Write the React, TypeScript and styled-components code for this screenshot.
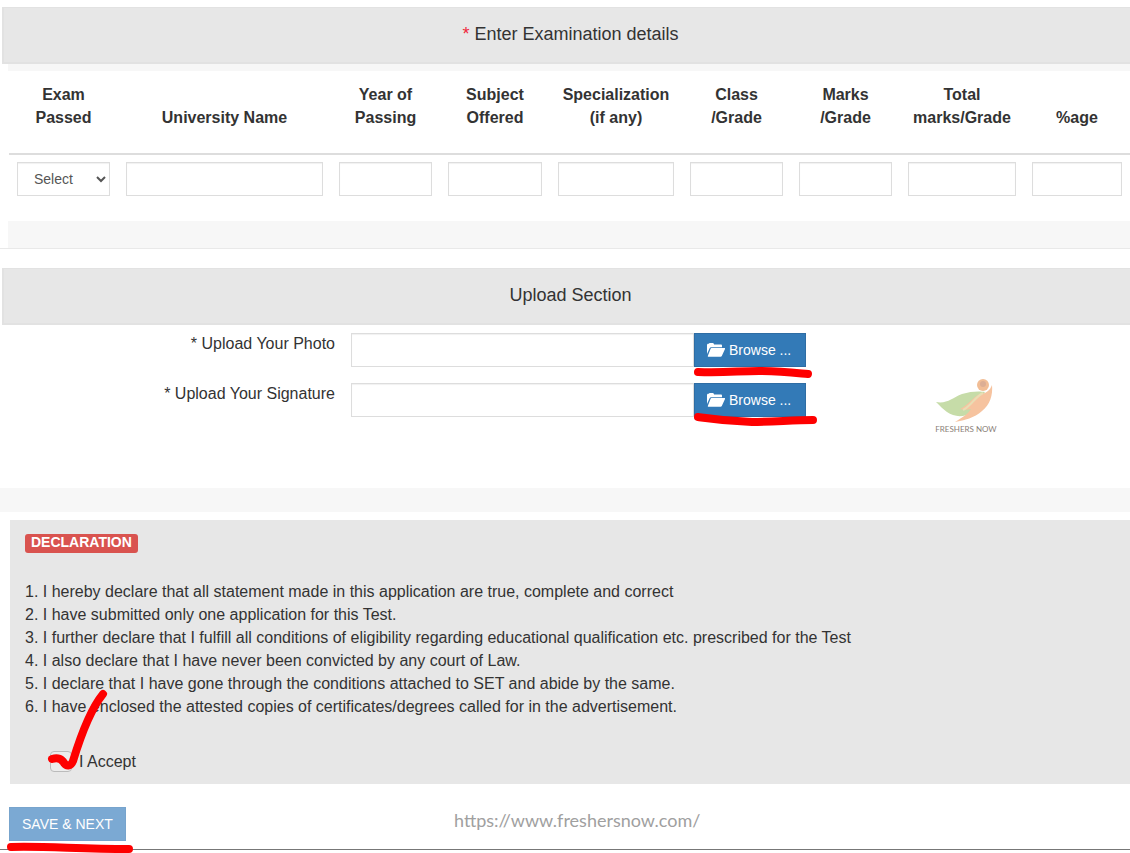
import React from "react";
import styled, { createGlobalStyle } from "styled-components";

const GlobalStyle = createGlobalStyle`
  *, *::before, *::after { box-sizing: border-box; }
  body {
    margin: 0;
    background: #fff;
    color: #333;
    font-family: "Liberation Sans", Arial, sans-serif;
    font-size: 16px;
    line-height: 23px;
  }
`;

const Page = styled.main`
  min-height: 100vh;
  padding: 7px 0 3px;
`;

const Heading = styled.h2`
  margin: 0 0 0 2px;
  padding: 15px 0 17px 7px;
  border: 1px solid #e2e2e2;
  border-width: 1px 0 2px 2px;
  background: #e7e7e7;
  font-size: 18px;
  font-weight: 400;
  line-height: 22px;
  text-align: center;
`;

const Required = styled.span`
  color: #f0283c;
`;

const ExamSection = styled.section`
  margin-bottom: 19px;
  border-bottom: 1px solid #e9e9e9;
`;

const ExamPanel = styled.div`
  margin-left: 8px;
  padding: 7px 0 27px;
  background: #f7f7f7;
`;

const TableWrap = styled.div`
  padding: 0 0 18px 1px;
  background: #fff;
`;

const ExamTable = styled.table`
  width: 100%;
  table-layout: fixed;
  border-collapse: separate;
  border-spacing: 0;
`;

const Col = styled.col<{ $width?: number }>`
  width: ${(p) => (p.$width ? `${p.$width}px` : "auto")};
`;

const HeadCell = styled.th`
  padding: 12px 0 24px;
  border-bottom: 2px solid #ddd;
  vertical-align: bottom;
  text-align: center;
  white-space: pre-line;
`;

const Cell = styled.td`
  padding: 7px 8px;
`;

const Field = styled.input`
  display: block;
  width: 100%;
  min-width: 0;
  height: 34px;
  padding: 6px 12px;
  border: 1px solid #ddd;
  border-radius: 0;
  background: #fff;
  color: #555;
  font: 14px "Liberation Sans", Arial, sans-serif;
  box-shadow: inset 0 1px 1px rgba(0, 0, 0, 0.06);
`;

const UploadBody = styled.div`
  display: grid;
  grid-template-columns: 31% 455px 1fr;
  grid-auto-rows: 34px;
  row-gap: 16px;
  margin-left: 1px;
  padding: 8px 0 21px;
`;

const UploadSection = styled.section`
  border-bottom: 24px solid #f7f7f7;
`;

const UploadLabel = styled.label`
  padding-right: 16px;
  line-height: 21px;
  text-align: right;
`;

const FileGroup = styled.div`
  display: flex;
  position: relative;
`;

const BrowseButton = styled.button`
  display: flex;
  flex: none;
  align-items: center;
  gap: 4px;
  width: 112px;
  height: 34px;
  padding: 0 12px;
  border: 1px solid #2e6da4;
  background: #337ab7;
  color: #fff;
  font: 14px "Liberation Sans", Arial, sans-serif;
  white-space: nowrap;
`;

const Logo = styled.div`
  display: flex;
  grid-column: 3;
  grid-row: 1 / 4;
  flex-direction: column;
  align-items: center;
  gap: 1px;
  justify-self: start;
  margin: 45px 0 0 129px;
  color: #8a8078;
  font: 8px/10px Lato, sans-serif;
  white-space: nowrap;
`;

const Declaration = styled.section`
  margin: 8px 0 0 10px;
  padding: 14px 15px 11px;
  background: #e7e7e7;
`;

const Badge = styled.h3`
  width: fit-content;
  margin: 0 0 27px;
  padding: 0 6px 3px;
  border-radius: 3px;
  background: #d9534f;
  color: #fff;
  font-size: 14px;
  line-height: 16px;
`;

const Clauses = styled.ol`
  margin: 0;
  padding: 0;
  list-style: none;
`;

const Accept = styled.div`
  display: flex;
  position: relative;
  align-items: center;
  gap: 7px;
  margin-top: 32px;
  padding-left: 25px;
`;

const Tick = styled.input`
  appearance: none;
  width: 22px;
  height: 21px;
  margin: 0;
  border: 1px solid #bbb;
  border-radius: 4px;
  background: #ececec;
`;

const Footer = styled.footer`
  display: grid;
  grid-template-columns: 40% 1fr;
  margin-top: 23px;
  padding-bottom: 8px;
  border-bottom: 1px solid #777;
`;

const SaveWrap = styled.div`
  position: relative;
  width: fit-content;
  margin-left: 9px;
`;

const SaveButton = styled.button`
  display: block;
  height: 34px;
  padding: 0 12px;
  border: 1px solid #77a4cd;
  background: #7ba9d3;
  color: #fff;
  font: 14px "Liberation Sans", Arial, sans-serif;
`;

const SiteLink = styled.a`
  padding: 1px 0 0 2px;
  color: #a0a0a0;
  font: 18px/24px Lato, sans-serif;
  text-decoration: none;
`;

const Marker = styled.svg<{ $left: number; $top: number }>`
  position: absolute;
  left: ${(p) => p.$left}px;
  top: ${(p) => p.$top}px;
  overflow: visible;
  pointer-events: none;
  fill: none;
  stroke: #fe0000;
  stroke-width: 8px;
  stroke-linecap: round;
  stroke-linejoin: round;
`;

const columns: { title: string; width?: number }[] = [
  { title: "Exam\nPassed", width: 109 },
  { title: "University Name" },
  { title: "Year of\nPassing", width: 109 },
  { title: "Subject\nOffered", width: 110 },
  { title: "Specialization\n(if any)", width: 132 },
  { title: "Class\n/Grade", width: 109 },
  { title: "Marks\n/Grade", width: 109 },
  { title: "Total\nmarks/Grade", width: 124 },
  { title: "%age", width: 106 },
];

const clauses = [
  "I hereby declare that all statement made in this application are true, complete and correct",
  "I have submitted only one application for this Test.",
  "I further declare that I fulfill all conditions of eligibility regarding educational qualification etc. prescribed for the Test",
  "I also declare that I have never been convicted by any court of Law.",
  "I declare that I have gone through the conditions attached to SET and abide by the same.",
  "I have enclosed the attested copies of certificates/degrees called for in the advertisement.",
];

const uploads = [
  { id: "photo", label: "Upload Your Photo", top: 35, stroke: "M4 4 C30 5 45 3 65 3 C88 3 103 5 114 6" },
  { id: "signature", label: "Upload Your Signature", top: 31, stroke: "M4 3 C18 5 30 7 58 8 C80 8 98 6 119 6" },
];

const FolderOpen = () => (
  <svg width="18" height="14" viewBox="0 0 18 14" fill="#fff" aria-hidden="true">
    <path d="M0 11V2.2C0 1.4.5.8 1.2.8h.6C2 .3 2.3 0 2.8 0h3c.5 0 .8.3 1 .8l.3.7h6.7c.8 0 1.2.5 1.2 1.2v1.5H4.2c-.8 0-1.3.3-1.6 1z" />
    <path d="M4.5 5.1h12.9c.6 0 .8.4.6.9l-3.2 6.9c-.2.5-.6.8-1.2.8H1.5c-.6 0-.8-.4-.6-.9l2.7-7c.2-.5.4-.7.9-.7z" />
  </svg>
);

const LogoMark = () => (
  <svg width="62" height="45" viewBox="0 0 62 45" aria-hidden="true">
    <path d="M1 24C12 26 17 20 27 16c9-3 18-3 23-2-4 5-5 13-13 20-8 6-18 5-25 0C8 31 5 28 1 24z" fill="#c6dca8" />
    <path d="M57 7c1 10-2 20-10 26-8 7-17 9-27 11 8-5 13-8 16-13-5 1-8 1-11 0 9-4 14-14 21-15 6-1 9-4 11-9z" fill="#f6c39f" />
    <path d="M48 15c-8 4-12 13-20 17" fill="none" stroke="#e9ddb4" strokeWidth="2" />
    <circle cx="48" cy="7" r="6" fill="#f1bd95" />
    <circle cx="48" cy="6" r="3" fill="#dcae94" />
  </svg>
);

export default function App() {
  return (
    <Page>
      <GlobalStyle />
      <ExamSection>
        <Heading>
          <Required>*</Required> Enter Examination details
        </Heading>
        <ExamPanel>
          <TableWrap>
            <ExamTable>
              <colgroup>
                {columns.map((c) => (
                  <Col key={c.title} $width={c.width} />
                ))}
              </colgroup>
              <thead>
                <tr>
                  {columns.map((c) => (
                    <HeadCell key={c.title} scope="col">
                      {c.title}
                    </HeadCell>
                  ))}
                </tr>
              </thead>
              <tbody>
                <tr>
                  {columns.map((c, i) => (
                    <Cell key={c.title}>
                      {i === 0 ? (
                        <Field as="select" aria-label="Exam Passed">
                          <option>Select</option>
                        </Field>
                      ) : (
                        <Field type="text" aria-label={c.title.replace("\n", " ")} />
                      )}
                    </Cell>
                  ))}
                </tr>
              </tbody>
            </ExamTable>
          </TableWrap>
        </ExamPanel>
      </ExamSection>

      <UploadSection>
        <Heading>Upload Section</Heading>
        <UploadBody>
          {uploads.map((u) => (
            <React.Fragment key={u.id}>
              <UploadLabel htmlFor={u.id}>* {u.label}</UploadLabel>
              <FileGroup>
                <Field id={u.id} type="text" readOnly />
                <BrowseButton type="button">
                  <FolderOpen />
                  Browse ...
                </BrowseButton>
                <Marker $left={343} $top={u.top} width="124" height="12" aria-hidden="true">
                  <path d={u.stroke} />
                </Marker>
              </FileGroup>
            </React.Fragment>
          ))}
          <Logo>
            <LogoMark />
            FRESHERS NOW
          </Logo>
        </UploadBody>
      </UploadSection>

      <Declaration>
        <Badge>DECLARATION</Badge>
        <Clauses>
          {clauses.map((text, i) => (
            <li key={text}>
              {i + 1}. {text}
            </li>
          ))}
        </Clauses>
        <Accept>
          <Tick type="checkbox" id="accept" />
          <label htmlFor="accept">I Accept</label>
          <Marker $left={24} $top={-60} width="60" height="80" aria-hidden="true">
            <path d="M3 69C9 67 13 69 15 73C18 77 22 76 24 71C31 48 41 20 54 4" />
          </Marker>
        </Accept>
      </Declaration>

      <Footer>
        <SaveWrap>
          <SaveButton type="submit">SAVE &amp; NEXT</SaveButton>
          <Marker $left={-2} $top={36} width="130" height="10" aria-hidden="true">
            <path d="M4 4C40 3 70 6 122 6" />
          </Marker>
        </SaveWrap>
        <SiteLink href="https://www.freshersnow.com/">https://www.freshersnow.com/</SiteLink>
      </Footer>
    </Page>
  );
}
